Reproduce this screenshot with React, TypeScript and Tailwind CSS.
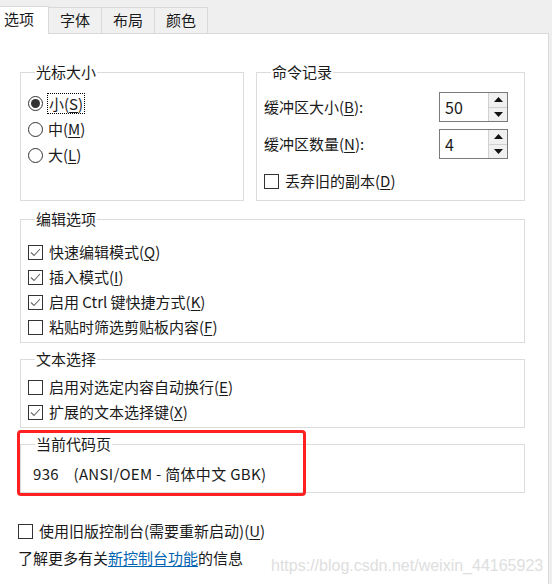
import type { ReactNode } from "react";

const font = { fontFamily: '"Noto Sans CJK SC", "Noto Sans", sans-serif' };

function Key({ k }: { k: string }) {
  return (
    <>
      (<span className="underline underline-offset-2">{k}</span>)
    </>
  );
}

function Group({ title, className, children }: { title: string; className: string; children: ReactNode }) {
  return (
    <fieldset className={`border border-[#dcdcdc] pl-[7px] ${className}`}>
      <legend className="ml-[7px] px-[1px] leading-[20px] text-[#1a1a1a]">{title}</legend>
      {children}
    </fieldset>
  );
}

function Radio({ on, children }: { on?: boolean; children: ReactNode }) {
  return (
    <div className="flex h-[26px] items-center gap-[5px]">
      <span className="flex h-[15px] w-[15px] items-center justify-center rounded-full border border-[#333]">
        {on && <span className="h-[9px] w-[9px] rounded-full bg-[#333]" />}
      </span>
      <span className={on ? "outline-1 outline-dotted outline-black px-[1px] leading-[19px]" : ""}>{children}</span>
    </div>
  );
}

function Check({ on, children, h = "h-[25px]" }: { on?: boolean; children: ReactNode; h?: string }) {
  return (
    <div className={`flex ${h} items-center gap-[6px]`}>
      <span className="flex h-[15px] w-[15px] shrink-0 items-center justify-center border border-[#333] bg-white">
        {on && (
          <svg width="13" height="13" viewBox="0 0 13 13">
            <path d="M2 6.5 L5 9.5 L11 3" fill="none" stroke="#666" strokeWidth="1.1" />
          </svg>
        )}
      </span>
      <span>{children}</span>
    </div>
  );
}

function Spin({ value }: { value: string }) {
  return (
    <div className="flex h-[30px] w-[69px] border border-[#7a7a7a] bg-white">
      <div className="flex-1 pl-[5px] text-[16px] leading-[28px]">{value}</div>
      <div className="flex w-[19px] flex-col border-l border-[#d0d0d0]">
        <div className="flex flex-1 items-center justify-center border-b border-[#d0d0d0] bg-[#f0f0f0]">
          <svg width="9" height="5" viewBox="0 0 9 5"><path d="M0 5 L4.5 0 L9 5 Z" fill="#111" /></svg>
        </div>
        <div className="flex flex-1 items-center justify-center bg-[#f0f0f0]">
          <svg width="9" height="5" viewBox="0 0 9 5"><path d="M0 0 L4.5 5 L9 0 Z" fill="#111" /></svg>
        </div>
      </div>
    </div>
  );
}

export default function App() {
  const tabs = ["字体", "布局", "颜色"];
  return (
    <div className="relative h-[584px] w-[552px] overflow-hidden bg-[#efefef] text-[15px] text-[#1a1a1a]" style={font}>
      {/* tab strip */}
      <div className="flex h-[33px] items-end">
        <div className="relative z-10 -mb-[1px] flex h-[28px] w-[49px] items-center border border-l-0 border-b-0 border-[#d9d9d9] bg-white pl-[4px] pb-[2px]">
          选项
        </div>
        {tabs.map((t) => (
          <div
            key={t}
            className="flex h-[26px] w-[53px] items-center justify-center border border-l-0 border-b-0 border-[#d9d9d9] bg-[#f0f0f0]"
          >
            {t}
          </div>
        ))}
      </div>

      {/* panel */}
      <div className="h-[551px] w-[549px] border-t border-r border-[#d9d9d9] bg-white pl-[20px] pt-[28px]">
        <div className="flex w-[505px] gap-[12px]">
          <Group title="光标大小" className="h-[139px] w-[224px] pt-[8px]">
            <Radio on>
              小<Key k="S" />
            </Radio>
            <Radio>
              中<Key k="M" />
            </Radio>
            <Radio>
              大<Key k="L" />
            </Radio>
          </Group>
          <Group title="命令记录" className="h-[139px] w-[269px] pr-[16px] pt-[10px]">
            <div className="flex h-[30px] items-center justify-between">
              <span>
                缓冲区大小<Key k="B" />:
              </span>
              <Spin value="50" />
            </div>
            <div className="mt-[7px] flex h-[30px] items-center justify-between">
              <span>
                缓冲区数量<Key k="N" />:
              </span>
              <Spin value="4" />
            </div>
            <div className="mt-[11px]">
              <Check h="h-[22px]">
                丢弃旧的副本<Key k="D" />
              </Check>
            </div>
          </Group>
        </div>

        <Group title="编辑选项" className="mt-[8px] h-[134px] w-[505px] pt-[11px]">
          <Check on>
            快速编辑模式<Key k="Q" />
          </Check>
          <Check on>
            插入模式<Key k="I" />
          </Check>
          <Check on>
            启用 Ctrl 键快捷方式<Key k="K" />
          </Check>
          <Check>
            粘贴时筛选剪贴板内容<Key k="F" />
          </Check>
        </Group>

        <Group title="文本选择" className="mt-[6px] h-[79px] w-[505px] pt-[6px]">
          <Check>
            启用对选定内容自动换行<Key k="E" />
          </Check>
          <Check on>
            扩展的文本选择键<Key k="X" />
          </Check>
        </Group>

        <Group title="当前代码页" className="mt-[6px] h-[59px] w-[505px] pt-[7px]">
          <div className="pl-[5px] leading-[25px] tracking-[0.3px]">
            936&nbsp;&nbsp;&nbsp;&nbsp;(ANSI/OEM - 简体中文 GBK)
          </div>
        </Group>

        <div className="-ml-[2px] mt-[27px]">
          <Check h="h-[22px]">
            使用旧版控制台(需要重新启动)<Key k="U" />
          </Check>
        </div>
        <div className="-ml-[2px] mt-[5px] leading-[22px]">
          了解更多有关<span className="text-[#0063b1] underline underline-offset-2">新控制台功能</span>的信息
        </div>
      </div>

      {/* annotation box */}
      <div className="pointer-events-none absolute left-[17px] top-[430px] h-[66px] w-[289px] rounded-[4px] border-[3px] border-[#ff2121]" />
      {/* watermark */}
      <div
        className="pointer-events-none absolute left-[271px] top-[554px] text-[16px] text-[#dedede]"
        style={{ fontFamily: '"Liberation Sans", Arial, sans-serif' }}
      >
        https://blog.csdn.net/weixin_44165923
      </div>
    </div>
  );
}
